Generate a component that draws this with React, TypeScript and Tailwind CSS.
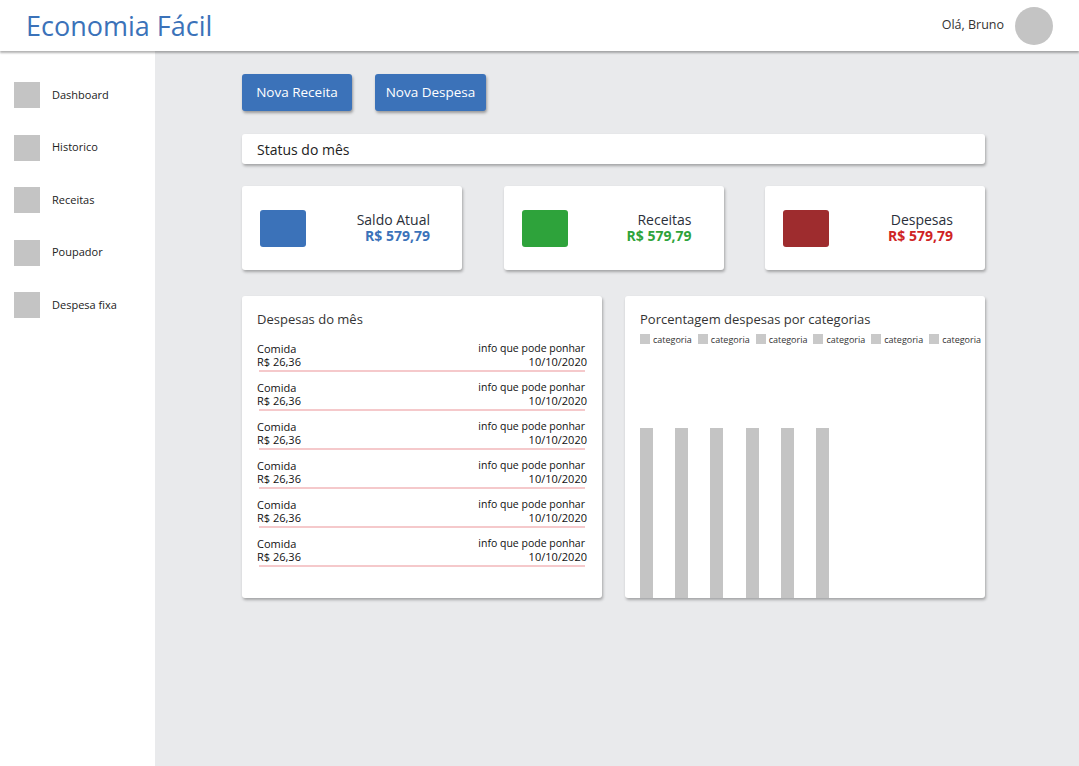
import React from "react";

const menu = ["Dashboard", "Historico", "Receitas", "Poupador", "Despesa fixa"];

const cards = [
  { title: "Saldo Atual", box: "bg-[#3b72b9]", value: "text-[#3b72b9]" },
  { title: "Receitas", box: "bg-[#2ea33b]", value: "text-[#2ea33b]" },
  { title: "Despesas", box: "bg-[#9e2c2e]", value: "text-[#cf2424]" },
];

export default function App() {
  return (
    <div className="h-[766px] w-[1079px] flex flex-col bg-[#e9eaec] overflow-hidden font-['Open_Sans',sans-serif]">
      <header className="relative z-10 h-[51px] bg-white flex items-center justify-between pl-[26px] pr-[26px] shadow-[0_2px_2px_rgba(0,0,0,0.3)]">
        <h1 className="text-[27px] text-[#3b72b9] leading-none">Economia Fácil</h1>
        <div className="flex items-center gap-[11px]">
          <span className="text-[12.5px] text-[#333]">Olá, Bruno</span>
          <div className="w-[38px] h-[38px] rounded-full bg-[#c4c4c4]" />
        </div>
      </header>

      <div className="flex flex-1">
        <aside className="w-[155px] bg-white pt-[31px] pl-[14px] flex flex-col gap-[26.5px]">
          {menu.map((m) => (
            <div key={m} className="flex items-center gap-[12px] h-[26px]">
              <div className="w-[26px] h-[26px] bg-[#c4c4c4]" />
              <span className="text-[11px] text-[#222]">{m}</span>
            </div>
          ))}
        </aside>

        <main className="flex-1 pl-[87px] pt-[23px]">
          <div className="w-[743px] flex flex-col">
            <div className="flex gap-[23px]">
              <button className="w-[110px] h-[37px] rounded-[3px] bg-[#3b72b9] text-white text-[13.5px] shadow-[1px_2px_3px_rgba(0,0,0,0.35)]">
                Nova Receita
              </button>
              <button className="w-[111px] h-[37px] rounded-[3px] bg-[#3b72b9] text-white text-[13.5px] shadow-[1px_2px_3px_rgba(0,0,0,0.35)]">
                Nova Despesa
              </button>
            </div>

            <div className="mt-[23px] h-[30px] bg-white rounded-[3px] flex items-center pl-[15px] text-[14px] text-[#222] shadow-[1px_2px_3px_rgba(0,0,0,0.3)]">
              Status do mês
            </div>

            <div className="mt-[22px] flex justify-between">
              {cards.map((c) => (
                <div
                  key={c.title}
                  className="w-[220px] h-[84px] bg-white rounded-[3px] flex items-center pl-[18px] pr-[32px] shadow-[1px_2px_3px_rgba(0,0,0,0.3)]"
                >
                  <div className={`w-[46px] h-[37px] rounded-[3px] ${c.box}`} />
                  <div className="flex-1 text-right leading-[16px]">
                    <div className="text-[14px] text-[#2a2f3a]">{c.title}</div>
                    <div className={`text-[14px] font-bold ${c.value}`}>R$ 579,79</div>
                  </div>
                </div>
              ))}
            </div>

            <div className="mt-[26px] flex gap-[23px]">
              <div className="w-[360px] h-[302px] bg-white rounded-[3px] pt-[14px] px-[15px] shadow-[1px_2px_3px_rgba(0,0,0,0.3)]">
                <div className="text-[13px] text-[#333]">Despesas do mês</div>
                <div className="mt-[12px] flex flex-col gap-[9px]">
                  {Array.from({ length: 6 }).map((_, i) => (
                    <div key={i} className="text-[11px] text-[#111] leading-[13px]">
                      <div className="flex justify-between">
                        <span>Comida</span>
                        <span className="pr-[2px] text-[10.5px]">info que pode ponhar</span>
                      </div>
                      <div className="flex justify-between">
                        <span>R$ 26,36</span>
                        <span>10/10/2020</span>
                      </div>
                      <div className="mt-[2px] ml-[2px] mr-[2px] h-[2px] bg-[#f5c9cb]" />
                    </div>
                  ))}
                </div>
              </div>

              <div className="w-[360px] h-[302px] bg-white rounded-[3px] pt-[14px] px-[15px] flex flex-col shadow-[1px_2px_3px_rgba(0,0,0,0.3)]">
                <div className="text-[13px] text-[#333]">Porcentagem despesas por categorias</div>
                <div className="mt-[3px] flex gap-[6px]">
                  {Array.from({ length: 6 }).map((_, i) => (
                    <div key={i} className="flex items-center gap-[3px]">
                      <div className="w-[10px] h-[10px] bg-[#c9c9c9]" />
                      <span className="text-[9px] text-[#333]">categoria</span>
                    </div>
                  ))}
                </div>
                <div className="flex-1 flex items-end gap-[22.2px]">
                  {Array.from({ length: 6 }).map((_, i) => (
                    <div key={i} className="w-[13px] h-[170px] bg-[#c4c4c4]" />
                  ))}
                </div>
              </div>
            </div>
          </div>
        </main>
      </div>
    </div>
  );
}
